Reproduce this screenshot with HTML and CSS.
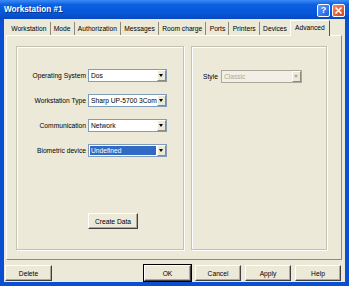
FILE: index.html
```html
<!DOCTYPE html>
<html lang="en">
<head>
    <meta charset="UTF-8">
    <title>Workstation #1</title>
    <link rel="stylesheet" href="styles.css">
</head>
<body>
  <div class="window">
    <div class="titlebar">
      <span class="title">Workstation #1</span>
      <div class="title-buttons">
        <span class="tb tb-help">?</span>
        <span class="tb tb-close">
          <svg width="9" height="9" viewBox="0 0 9 9"><path d="M1.5 1.5 L7.5 7.5 M7.5 1.5 L1.5 7.5" stroke="#fff" stroke-width="1.6"/></svg>
        </span>
      </div>
    </div>

    <div class="client">
      <div class="tabs">
        <span class="tab">Workstation</span>
        <span class="tab">Mode</span>
        <span class="tab">Authorization</span>
        <span class="tab">Messages</span>
        <span class="tab">Room charge</span>
        <span class="tab">Ports</span>
        <span class="tab">Printers</span>
        <span class="tab">Devices</span>
        <span class="tab active">Advanced</span>
      </div>

      <div class="tab-panel">
        <div class="group group-left">
          <div class="form">
            <label>Operating System</label>
            <div class="combo"><span class="combo-text">Dos</span><span class="combo-btn"></span></div>

            <label>Workstation Type</label>
            <div class="combo"><span class="combo-text">Sharp UP-5700 3Com</span><span class="combo-btn"></span></div>

            <label>Communication</label>
            <div class="combo"><span class="combo-text">Network</span><span class="combo-btn"></span></div>

            <label>Biometric device</label>
            <div class="combo"><span class="combo-text selected">Undefined</span><span class="combo-btn"></span></div>
          </div>
          <button class="btn btn-create">Create Data</button>
        </div>

        <div class="group group-right">
          <div class="style-row">
            <label>Style</label>
            <div class="combo disabled"><span class="combo-text">Classic</span><span class="combo-btn"></span></div>
          </div>
        </div>
      </div>

      <div class="footer">
        <button class="btn">Delete</button>
        <div class="footer-right">
          <button class="btn default">OK</button>
          <button class="btn">Cancel</button>
          <button class="btn">Apply</button>
          <button class="btn">Help</button>
        </div>
      </div>
    </div>
  </div>
</body>
</html>
```

FILE: styles.css
```css
body {
  margin: 0;
  font-family: "Liberation Sans", Arial, sans-serif;
  font-size: 6.7px;
  color: #000;
}

.window {
  width: 349px;
  height: 286px;
  box-sizing: border-box;
  background: #0a4fd2;
  display: flex;
  flex-direction: column;
}

/* title bar */
.titlebar {
  height: 19px;
  display: flex;
  align-items: center;
  justify-content: space-between;
  padding: 0 4px 0 4px;
  background: linear-gradient(#3b8cf6 0%, #0b5fe0 25%, #0757d8 70%, #0848c0 100%);
}

.title {
  color: #fff;
  font-weight: bold;
  font-size: 8.2px;
  text-shadow: 1px 1px 0 #0a2f8a;
}

.title-buttons {
  display: flex;
  gap: 2px;
  margin-top: 1px;
}

.tb {
  width: 11px;
  height: 11px;
  border: 1px solid #fff;
  border-radius: 2px;
  display: flex;
  align-items: center;
  justify-content: center;
  color: #fff;
  font-weight: bold;
  font-size: 9px;
}

.tb-help {
  background: linear-gradient(135deg, #5d9bff, #1f5fe0);
}

.tb-close {
  background: linear-gradient(135deg, #f08a6a, #d8431f);
}

/* dialog body */
.client {
  flex: 1;
  margin: 0 4px 4px;
  background: #ece9d8;
  display: flex;
  flex-direction: column;
  padding-top: 1px;
}

.tabs {
  display: flex;
  align-items: flex-end;
  height: 15px;
  margin-left: 4px;
  position: relative;
  z-index: 1;
}

.tab {
  height: 13px;
  line-height: 13px;
  padding: 0 3.2px;
  border-right: 1px solid #8e8b7d;
  white-space: nowrap;
}

.tab.active {
  height: 16px;
  line-height: 14px;
  margin-bottom: -1px;
  margin-left: -1px;
  padding: 0 4px;
  border-left: 1px solid #fff;
  border-top: 1px solid #fff;
  border-right: 1px solid #555;
  box-sizing: border-box;
  background: #ece9d8;
}

.tab-panel {
  height: 225px;
  margin: 0 3px 0 2px;
  box-sizing: border-box;
  border: 1px solid;
  border-color: #fff #8e8b7d #8e8b7d #fff;
  padding: 10px 14px 9px 9px;
  display: flex;
  gap: 7px;
}

.group {
  border: 1px solid #c5c2b2;
  box-shadow: inset 1px 1px 0 #fff, 1px 1px 0 #fff;
  display: flex;
  flex-direction: column;
}

.group-left {
  width: 168px;
  box-sizing: border-box;
}

.group-right {
  flex: 1;
}

.form {
  display: grid;
  grid-template-columns: 69px 79px;
  column-gap: 2px;
  row-gap: 12px;
  margin-top: 22px;
  align-items: center;
}

.form label {
  text-align: right;
  white-space: nowrap;
}

.combo {
  height: 13px;
  box-sizing: border-box;
  border: 1px solid #7f9db9;
  background: #fff;
  display: flex;
}

.combo-text {
  flex: 1;
  line-height: 11px;
  padding-left: 2px;
  white-space: nowrap;
  overflow: hidden;
}

.combo-text.selected {
  margin: 1px;
  line-height: 9px;
  padding-left: 1px;
  background: #316ac5;
  color: #fff;
}

.combo-btn {
  width: 9px;
  box-sizing: border-box;
  border: 1px solid;
  border-color: #fff #8e8b7d #8e8b7d #fff;
  background: #ece9d8;
  position: relative;
}

.combo-btn::after {
  content: "";
  position: absolute;
  left: 1px;
  top: 3px;
  border-left: 2.5px solid transparent;
  border-right: 2.5px solid transparent;
  border-top: 3px solid #000;
}

.combo.disabled {
  border-color: #aca899;
  background: #f2f0e6;
  width: 81px;
}

.combo.disabled .combo-text {
  color: #aca899;
}

.combo.disabled .combo-btn::after {
  border-top-color: #aca899;
}

.style-row {
  display: flex;
  align-items: center;
  gap: 3px;
  margin-top: 23px;
  padding-left: 11px;
}

/* buttons */
.btn {
  font-family: inherit;
  font-size: 6.7px;
  height: 16px;
  width: 46px;
  padding: 0;
  background: #ece9d8;
  border: 1px solid;
  border-color: #fff #404040 #404040 #fff;
  box-shadow: inset -1px -1px 0 #aca899;
  color: #000;
}

.btn.default {
  outline: 1px solid #000;
  outline-offset: 0;
}

.btn-create {
  width: 50px;
  margin: auto 0 20px 71px;
}

.footer {
  display: flex;
  justify-content: space-between;
  margin-top: 5px;
  padding: 0 4px 0 1px;
}

.footer .btn:first-child {
  width: 47px;
}

.footer-right {
  display: flex;
  gap: 4px;
}
```
